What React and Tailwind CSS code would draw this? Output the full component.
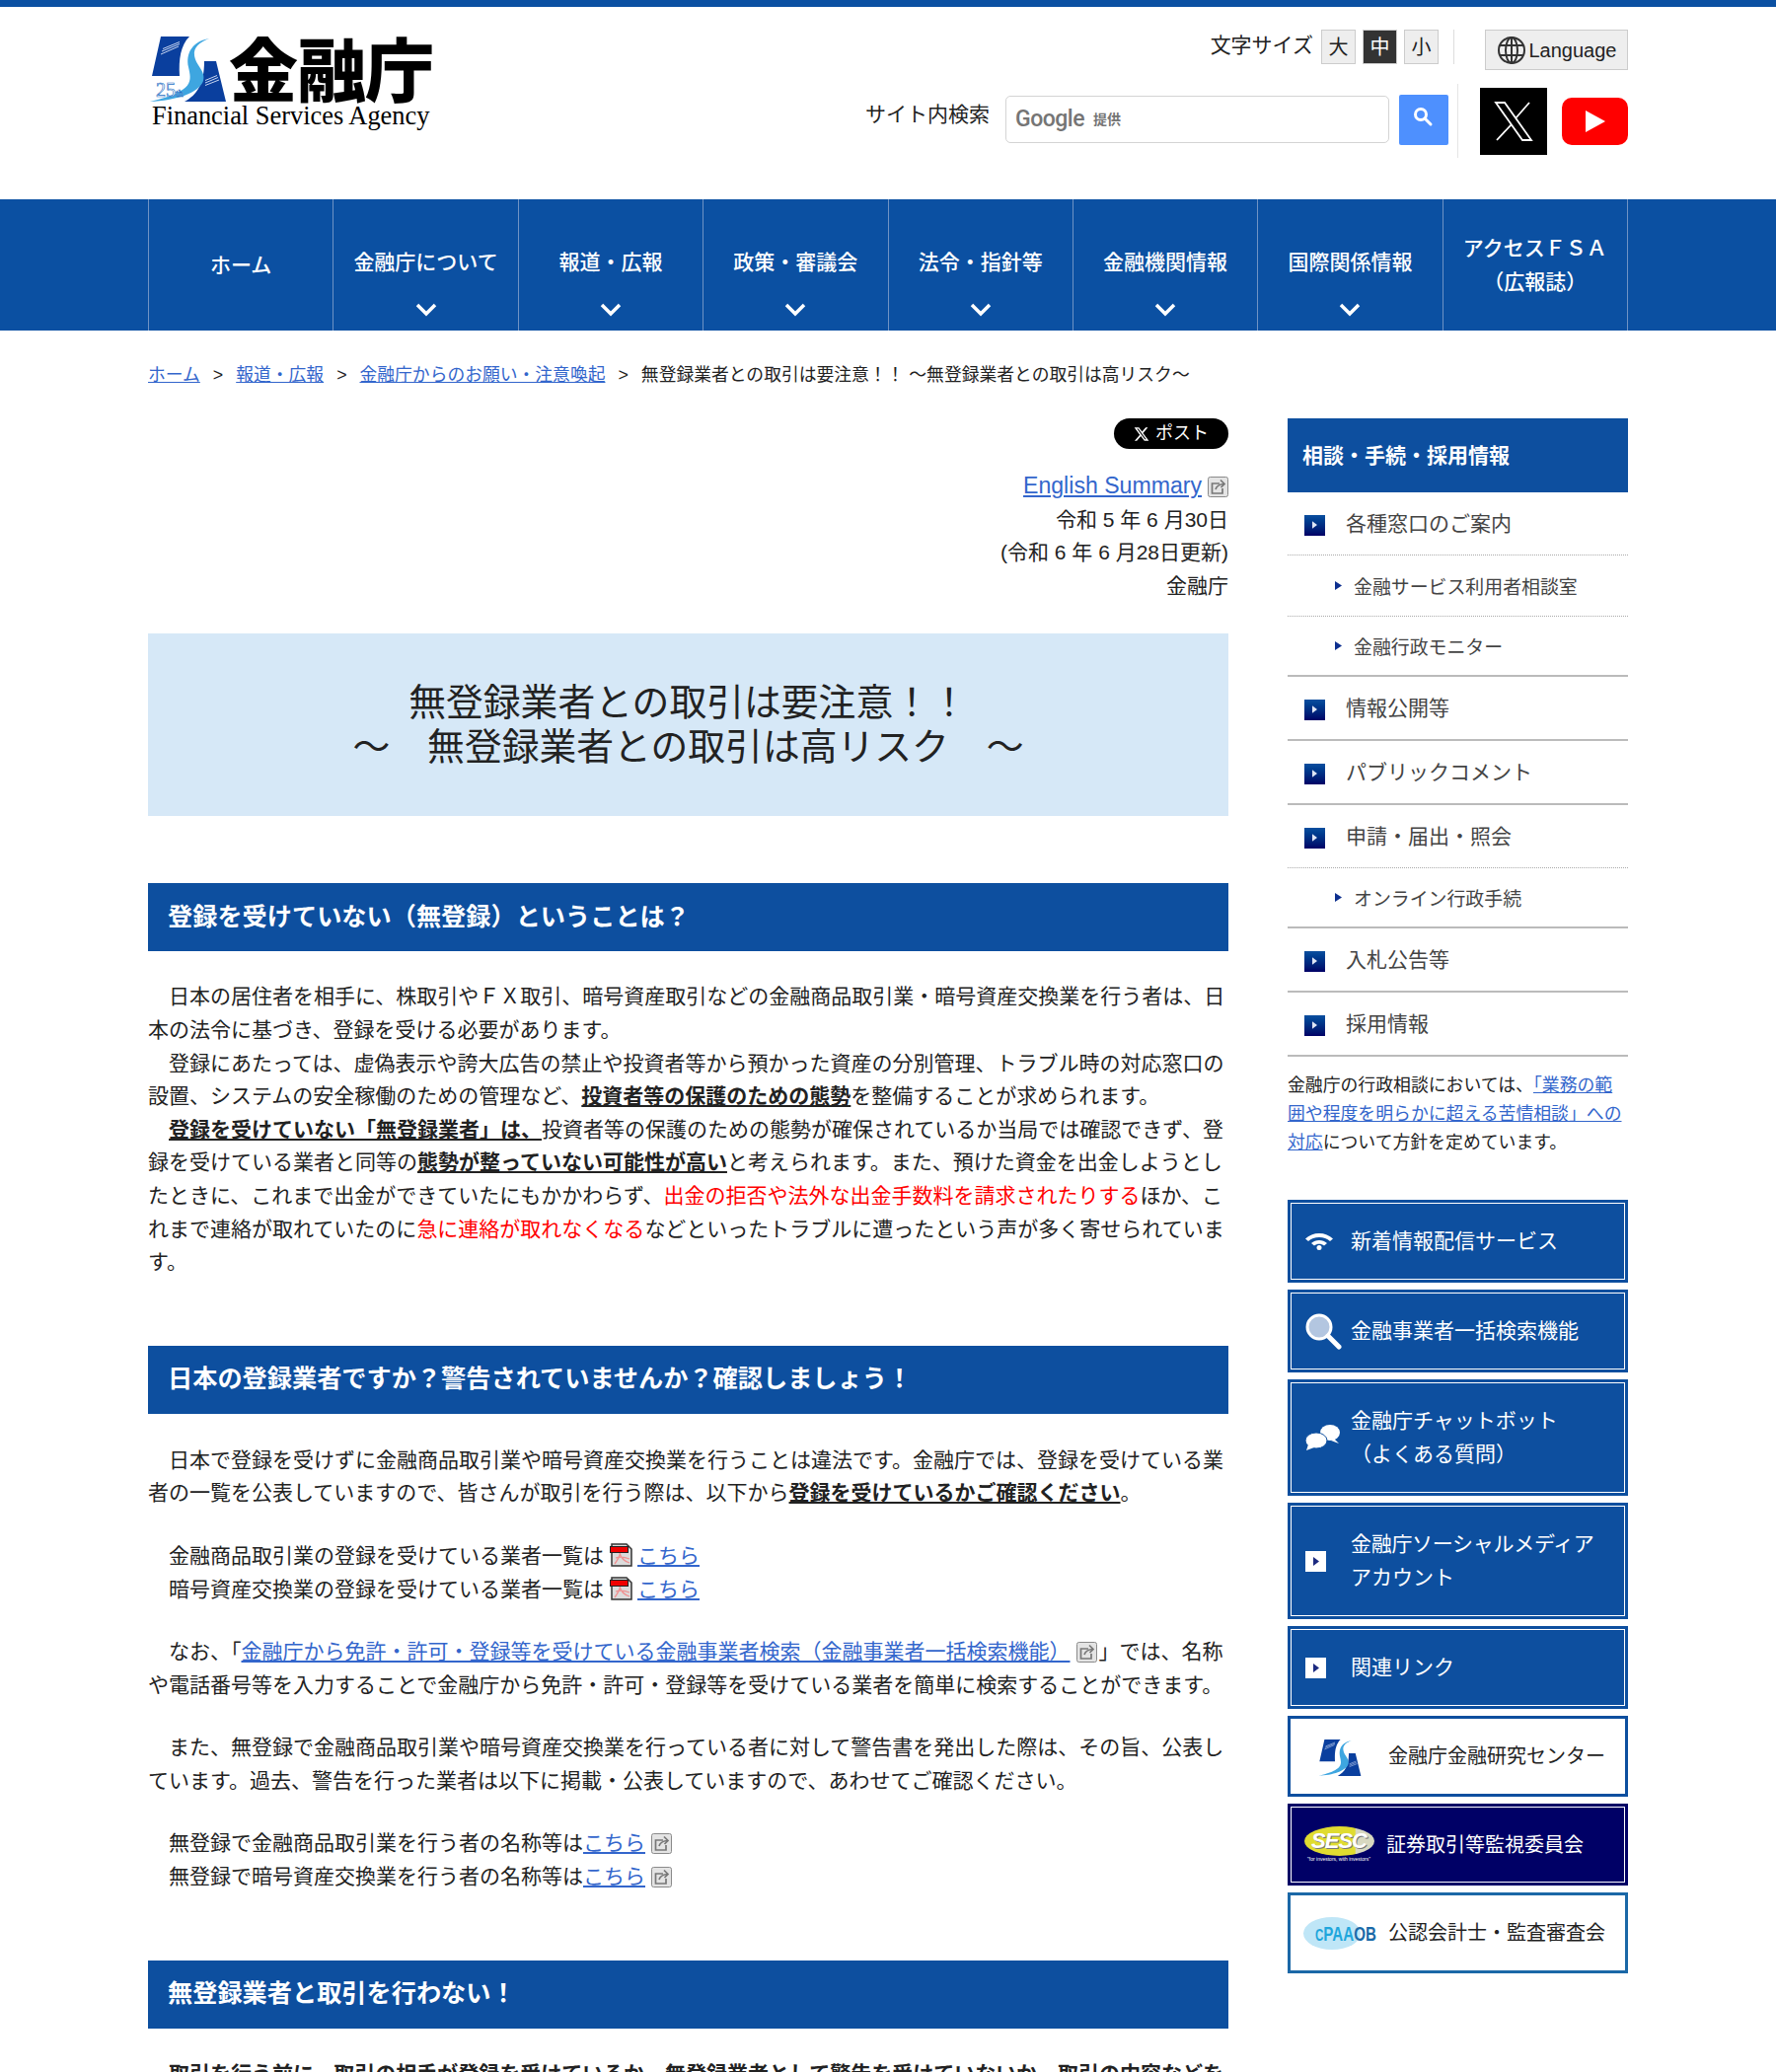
import React from 'react';

const NAV = [
  { label: ['ホーム'], chevron: false },
  { label: ['金融庁について'], chevron: true },
  { label: ['報道・広報'], chevron: true },
  { label: ['政策・審議会'], chevron: true },
  { label: ['法令・指針等'], chevron: true },
  { label: ['金融機関情報'], chevron: true },
  { label: ['国際関係情報'], chevron: true },
  { label: ['アクセスＦＳＡ', '（広報誌）'], chevron: false },
];

const SIDE_MENU = [
  { text: '各種窓口のご案内', line: 'dotted', h: 'h-[64px]' },
  { text: '金融サービス利用者相談室', sub: true, line: 'dotted', h: 'h-[62px]' },
  { text: '金融行政モニター', sub: true, line: 'solid', h: 'h-[61px]' },
  { text: '情報公開等', line: 'solid', h: 'h-[65px]' },
  { text: 'パブリックコメント', line: 'solid', h: 'h-[65px]' },
  { text: '申請・届出・照会', line: 'dotted', h: 'h-[64px]' },
  { text: 'オンライン行政手続', sub: true, line: 'solid', h: 'h-[61px]' },
  { text: '入札公告等', line: 'solid', h: 'h-[65px]' },
  { text: '採用情報', line: 'solid', h: 'h-[65px]' },
];

function Arrow() {
  return (
    <span className="mt-[3px] flex h-[21px] w-[21px] shrink-0 items-center justify-center bg-gradient-to-b from-[#0d4f9f] to-[#000066]">
      <svg width="5" height="8" viewBox="0 0 6 9"><path d="M0 0l6 4.500L0 9z" fill="#dfe6f5" /></svg>
    </span>
  );
}

function WhiteArrow() {
  return (
    <span className="flex h-[21px] w-[21px] shrink-0 items-center justify-center bg-white">
      <svg width="6" height="9" viewBox="0 0 6 9"><path d="M0 0l6 4.500L0 9z" fill="#1c2a80" /></svg>
    </span>
  );
}

function ExternalIcon({ flush }) {
  return (
    <svg className={`ml-[6px] inline-block align-[-4px] ${flush ? '' : 'mr-[2px]'}`} width="21" height="21" viewBox="0 0 21 21">
      <rect x="0.5" y="0.5" width="20" height="20" rx="2" fill="#e4e4e4" stroke="#8a8a8a" />
      <path d="M12 7H4.500v10H15v-5" fill="none" stroke="#777" strokeWidth="1.700" />
      <path d="M8 13c1-3.500 3-5 8-5.500M13 3.500L17 7.500l-3.500 3.500" fill="none" stroke="#777" strokeWidth="1.700" />
    </svg>
  );
}

function PdfIcon() {
  return (
    <svg className="ml-[6px] mr-[5px] inline-block align-[-4px]" width="23" height="24" viewBox="0 0 23 24">
      <path d="M2 1h15l5 5v17H2z" fill="#dcdcdc" stroke="#333" strokeWidth="1.500" />
      <path d="M5 21c3-4 6-9 5.500-13M6 15c4-1.500 8-1.500 14 1M10 10c1 4 4 8 10 10" fill="none" stroke="#f09090" strokeWidth="1.300" />
      <rect x="0.500" y="3.500" width="18" height="6" fill="#f00000" stroke="#222" strokeWidth="1" />
    </svg>
  );
}

function FsaMark({ className, badge }) {
  return (
    <svg className={className} viewBox="0 0 80 75">
      <path d="M13 7H42C33 16 31 30 32 47H4Z" fill="#0a3f9e" />
      <path d="M57 32H69L79 73H37C50 66 57 55 57 32Z" fill="#0a3f9e" />
      <path d="M62 9C45 12 38 24 41 38C44 52 48 62 2 73C28 72 52 64 56 52C59 42 48 36 47 26C46 18 52 13 62 9Z" fill="#3ea6e0" />
      <path d="M13 25L31 17M14 22L32 14.500M15 19.500L32 12.500M58 56.500L72 51M58 54L71 48.500M58 51.500L70 46.500" stroke="#c6d4f0" strokeWidth="1" />
      {badge && <text x="8" y="68" fontSize="20" fontFamily="Liberation Serif" fill="#fff" stroke="#1f6fc4" strokeWidth="0.600">25<tspan fontSize="10">th</tspan></text>}
    </svg>
  );
}

function SideButton({ children, icon, tall, variant = 'blue' }) {
  const heights = tall ? 'h-[118px]' : 'h-[84px]';
  if (variant === 'white' || variant === 'cpa') {
    return (
      <a className={`flex h-[82px] items-center border-[3px] bg-white ${variant === 'cpa' ? 'border-[#1b68a7]' : 'border-[#0d4f9f]'}`}>
        <span className="flex w-[99px] shrink-0 items-center justify-center">{icon}</span>
        <span className="text-[20px] text-[#222]">{children}</span>
      </a>
    );
  }
  if (variant === 'navy') {
    return (
      <div className="h-[83px] bg-[#000066] p-[3px]">
        <a className="flex h-full items-center border border-white">
          <span className="flex w-[96px] shrink-0 items-center justify-center">{icon}</span>
          <span className="text-[20px] text-white">{children}</span>
        </a>
      </div>
    );
  }
  return (
    <div className={`${heights} bg-[#0d4f9f] p-[3px]`}>
      <a className="flex h-full items-center border border-white pl-[13px]">
        <span className="flex w-[47px] shrink-0 items-center pl-[1px]">{icon}</span>
        <span className="text-[21px] leading-[34px] text-white">{children}</span>
      </a>
    </div>
  );
}

function Sidebar() {
  return (
    <aside className="w-[345px] shrink-0">
      <h2 className="flex h-[75px] items-center bg-[#0d4f9f] pl-[15px] text-[21px] font-bold text-white">相談・手続・採用情報</h2>
      <ul>
        {SIDE_MENU.map((item) => (
          <li
            key={item.text}
            className={`flex items-center ${item.h} ${item.line === 'dotted' ? 'border-b border-dotted border-[#aaa]' : 'border-b-2 border-solid border-[#bbb]'}`}
          >
            {item.sub ? (
              <>
                <svg className="ml-[48px] mr-[12px]" width="7" height="9" viewBox="0 0 7 9"><path d="M0 0l7 4.500L0 9z" fill="#0d2f8f" /></svg>
                <span className="pt-[5px] text-[18.900px] text-[#444]">{item.text}</span>
              </>
            ) : (
              <>
                <span className="ml-[17px] mr-[21px]"><Arrow /></span>
                <span className="text-[21px] text-[#444]">{item.text}</span>
              </>
            )}
          </li>
        ))}
      </ul>
      <p className="mt-[15px] text-[17.850px] leading-[29px] text-[#222]">
        金融庁の行政相談においては、<a className="text-[#3366cc] underline">「業務の範囲や程度を明らかに超える苦情相談」への対応</a>について方針を定めています。
      </p>
      <div className="mt-[43px] flex flex-col gap-[7px]">
        <SideButton icon={
          <svg width="28" height="18" viewBox="0 0 28 18"><path d="M0 6.500c7-7.500 21-7.500 28 0l-3 2.500c-5.500-5.500-16.500-5.500-22 0zM6 11c4.500-4 11.500-4 16 0l-3 2.500c-3-2.500-7-2.500-10 0z" fill="#fff" /><circle cx="14" cy="15.500" r="2.500" fill="#fff" /></svg>
        }>新着情報配信サービス</SideButton>
        <SideButton icon={
          <svg width="37" height="37" viewBox="0 0 37 37"><circle cx="14" cy="14" r="12" fill="#b3c6e0" stroke="#fff" strokeWidth="3" /><path d="M23 23l11 11" stroke="#fff" strokeWidth="5" strokeLinecap="round" /></svg>
        }>金融事業者一括検索機能</SideButton>
        <SideButton tall icon={
          <svg width="36" height="28" viewBox="0 0 36 28"><ellipse cx="25" cy="9" rx="10" ry="8" fill="#fff" /><path d="M29 15l5 5-8-3z" fill="#fff" /><ellipse cx="11" cy="17" rx="11" ry="8" fill="#fff" stroke="#0d4f9f" strokeWidth="1" /><path d="M3 21l-2 6 8-3z" fill="#fff" /></svg>
        }>金融庁チャットボット<br />（よくある質問）</SideButton>
        <SideButton tall icon={<WhiteArrow />}><span className="tracking-[-0.300px]">金融庁ソーシャルメディア</span><br />アカウント</SideButton>
        <SideButton icon={<WhiteArrow />}>関連リンク</SideButton>
        <SideButton variant="white" icon={<FsaMark className="h-[42px] w-[45px]" />}>金融庁金融研究センター</SideButton>
        <SideButton variant="navy" icon={
          <span className="flex flex-col items-center">
            <span className="flex h-[30px] w-[71px] items-center justify-center rounded-[50%] bg-[linear-gradient(90deg,#e0dc30_72%,#d8d8c0_74%)] text-[22px] font-bold italic leading-none tracking-[-1px] text-white [text-shadow:1px_1px_0_#777]">SESC</span>
            <span className="whitespace-nowrap text-[5px] leading-[7px] text-white">"for investors, with investors"</span>
          </span>
        }>証券取引等監視委員会</SideButton>
        <SideButton variant="cpa" icon={
          <span className="ml-[-15px] flex h-[33px] w-[58px] items-center justify-start self-center rounded-[50%] bg-[#bfe6f7] pl-[12px] font-bold leading-none">
            <span className="origin-left scale-x-[0.72] whitespace-nowrap text-[21px] text-[#1fa6dc]"><span className="text-[16px]">C</span>PAA<span className="text-[#1a6aa8]">OB</span></span>
          </span>
        }>公認会計士・監査審査会</SideButton>
      </div>
    </aside>
  );
}

function SectionTitle({ children }) {
  return <h2 className="flex h-[69px] items-center bg-[#0d4f9f] pl-[20px] text-[25.200px] font-bold text-white">{children}</h2>;
}

function Link({ children }) {
  return <a className="text-[#3366cc] underline">{children}</a>;
}

function Main() {
  return (
    <main className="w-[1095px] shrink-0">
      <div className="flex justify-end">
        <a className="flex h-[31px] w-[116px] items-center justify-center gap-[6px] rounded-full bg-black text-[18px] text-white">
          <svg width="16" height="16" viewBox="0 0 24 24"><path d="M18.200 2h3.400l-7.400 8.500L23 22h-6.800l-5.300-7-6.100 7H1.400l7.900-9L1 2h7l4.800 6.400zM17 20h1.900L7 3.900H5z" fill="#fff" /></svg>
          ポスト
        </a>
      </div>
      <div className="mt-[21px] text-right text-[21px] leading-[33.600px] text-[#222]">
        <p><a className="text-[23.100px] text-[#3366cc] underline">English Summary</a><ExternalIcon flush /></p>
        <p>令和 5 年 6 月30日</p>
        <p>(令和 6 年 6 月28日更新)</p>
        <p>金融庁</p>
      </div>
      <h1 className="mt-[32px] flex h-[185px] flex-col items-center justify-center bg-[#d6e8f7] text-center text-[37.800px] font-normal leading-[45px] text-[#222]">
        <span>無登録業者との取引は要注意！！</span>
        <span>～　無登録業者との取引は高リスク　～</span>
      </h1>

      <div className="mt-[68px]"><SectionTitle>登録を受けていない（無登録）ということは？</SectionTitle></div>
      <div className="mt-[29px] text-[21px] leading-[33.600px] text-[#222]">
        <p>　日本の居住者を相手に、株取引やＦＸ取引、暗号資産取引などの金融商品取引業・暗号資産交換業を行う者は、日本の法令に基づき、登録を受ける必要があります。</p>
        <p>　登録にあたっては、虚偽表示や誇大広告の禁止や投資者等から預かった資産の分別管理、トラブル時の対応窓口の設置、システムの安全稼働のための管理など、<strong className="underline">投資者等の保護のための態勢</strong>を整備することが求められます。</p>
        <p>　<strong className="underline">登録を受けていない「無登録業者」は、</strong>投資者等の保護のための態勢が確保されているか当局では確認できず、登録を受けている業者と同等の<strong className="underline">態勢が整っていない可能性が高い</strong>と考えられます。また、預けた資金を出金しようとしたときに、これまで出金ができていたにもかかわらず、<span className="text-[#ff0000]">出金の拒否や法外な出金手数料を請求されたりする</span>ほか、これまで連絡が取れていたのに<span className="text-[#ff0000]">急に連絡が取れなくなる</span>などといったトラブルに遭ったという声が多く寄せられています。</p>
      </div>

      <div className="mt-[68px]"><SectionTitle>日本の登録業者ですか？警告されていませんか？確認しましょう！</SectionTitle></div>
      <div className="mt-[30px] flex flex-col gap-[30px] text-[21px] leading-[33.600px] text-[#222]">
        <p>　日本で登録を受けずに金融商品取引業や暗号資産交換業を行うことは違法です。金融庁では、登録を受けている業者の一覧を公表していますので、皆さんが取引を行う際は、以下から<strong className="underline">登録を受けているかご確認ください</strong>。</p>
        <p className="pl-[21px]">
          金融商品取引業の登録を受けている業者一覧は<PdfIcon /><Link>こちら</Link><br />
          暗号資産交換業の登録を受けている業者一覧は<PdfIcon /><Link>こちら</Link>
        </p>
        <p>　なお、「<Link>金融庁から免許・許可・登録等を受けている金融事業者検索（金融事業者一括検索機能）</Link><ExternalIcon />」では、名称や電話番号等を入力することで金融庁から免許・許可・登録等を受けている業者を簡単に検索することができます。</p>
        <p>　また、無登録で金融商品取引業や暗号資産交換業を行っている者に対して警告書を発出した際は、その旨、公表しています。過去、警告を行った業者は以下に掲載・公表していますので、あわせてご確認ください。</p>
        <p className="pl-[21px]">
          無登録で金融商品取引業を行う者の名称等は<Link>こちら</Link><ExternalIcon /><br />
          無登録で暗号資産交換業を行う者の名称等は<Link>こちら</Link><ExternalIcon />
        </p>
      </div>

      <div className="mt-[68px]"><SectionTitle>無登録業者と取引を行わない！</SectionTitle></div>
      <div className="mt-[29px] text-[21px] leading-[33.600px] text-[#222]">
        <p><strong className="underline">　取引を行う前に、取引の相手が登録を受けているか、無登録業者として警告を受けていないか、取引の内容などを確認しましょう。</strong></p>
      </div>
    </main>
  );
}

export default function App() {
  return (
    <div className="h-[2100px] overflow-hidden bg-white font-['Liberation_Sans','Noto_Sans_CJK_JP',sans-serif]">
      <div className="h-[7px] bg-[#0b50a2]" />
      <header className="mx-auto flex h-[195px] w-[1500px] justify-between">
        <div className="pt-[23px]">
          <div className="flex items-start">
            <FsaMark badge className="h-[75px] w-[80px]" />
            <span className="ml-[2px] whitespace-nowrap text-[70px] font-black leading-[88px] tracking-[-1px] text-black">金融庁</span>
          </div>
          <div className="mt-[-16px] pl-[4px] font-['Liberation_Serif'] text-[26.400px] leading-[30px] text-black">Financial Services Agency</div>
        </div>
        <div className="flex flex-col items-end pt-[23px]">
          <div className="flex items-start">
            <span className="mr-[8px] text-[21px] leading-[32px] text-[#222]">文字サイズ</span>
            <div className="flex gap-[7px] text-[20px]">
              <span className="flex h-[35px] w-[35px] items-center justify-center border border-[#ccc] bg-[#eee] text-[#222]">大</span>
              <span className="flex h-[35px] w-[35px] items-center justify-center border border-[#ccc] bg-[#333] text-white">中</span>
              <span className="flex h-[35px] w-[35px] items-center justify-center border border-[#ccc] bg-[#eee] text-[#222]">小</span>
            </div>
            <span className="ml-[15px] mr-[31px] h-[35px] w-px bg-[#ddd]" />
            <span className="flex h-[41px] w-[145px] items-center justify-center gap-[3px] border border-[#ccc] bg-[#eee] text-[20px] text-[#222]">
              <svg width="30" height="30" viewBox="0 0 30 30" fill="none" stroke="#333" strokeWidth="2">
                <circle cx="15" cy="15" r="13" /><ellipse cx="15" cy="15" rx="6" ry="13" /><path d="M3 10h24M3 20h24M15 2v26" />
              </svg>
              Language
            </span>
          </div>
          <div className="mt-[14px] flex items-center">
            <span className="mb-[13px] mr-[16px] text-[21px] text-[#222]">サイト内検索</span>
            <div className="mb-[3px] flex h-[48px] w-[389px] items-center rounded-[5px] border border-[#d4d4d4] bg-white pl-[9px]">
              <span className="font-['Roboto'] text-[23px] font-medium tracking-[-0.500px] text-[#757575]">Google</span>
              <span className="ml-[9px] text-[14px] font-bold text-[#757575]">提供</span>
            </div>
            <button className="mb-[3px] ml-[10px] flex h-[51px] w-[50px] items-center justify-center rounded-[2px] bg-[#4e90fe]">
              <svg className="mb-[5px] mr-[3px]" width="22" height="22" viewBox="0 0 22 22" fill="none" stroke="#fff"><circle cx="9" cy="8" r="5.500" strokeWidth="3" /><path d="M13 12l6 6" strokeWidth="3" strokeLinecap="round" /></svg>
            </button>
            <span className="ml-[9px] mr-[22px] h-[75px] w-px bg-[#e5e5e5]" />
            <span className="flex h-[68px] w-[68px] items-center justify-center bg-black">
              <svg width="40" height="40" viewBox="0 0 40 40" fill="none" stroke="#fff" strokeWidth="1.800"><path d="M2 1h9l27 38h-9zM36 1L22 17M18 23L3 39" /></svg>
            </span>
            <span className="ml-[15px] flex h-[48px] w-[67px] items-center justify-center rounded-[10px] bg-[#ff0000]">
              <svg width="20" height="22" viewBox="0 0 20 22"><path d="M0 0l20 11L0 22z" fill="#fff" /></svg>
            </span>
          </div>
        </div>
      </header>

      <nav className="h-[133px] bg-[#0b50a2]">
        <ul className="mx-auto flex h-full w-[1500px]">
          {NAV.map((item) => (
            <li key={item.label[0]} className="relative flex h-full flex-1 flex-col items-center justify-center border-l border-[#6f93c4] text-[21px] font-medium leading-[34px] text-white last:border-r">
              {item.label.map((line) => (
                <span key={line} className={item.chevron ? 'mb-[6px]' : ''}>{line}</span>
              ))}
              {item.chevron && (
                <svg className="absolute bottom-[14px] left-1/2 ml-[-11px]" width="22" height="14" viewBox="0 0 22 14" fill="none" stroke="#fff" strokeWidth="3.500"><path d="M2 2l9 9 9-9" /></svg>
              )}
            </li>
          ))}
        </ul>
      </nav>

      <div className="mx-auto w-[1500px]">
        <div className="flex h-[89px] items-center pt-[2px] text-[17.800px] text-[#222]">
          <Link>ホーム</Link><span className="mx-[13px]">&gt;</span>
          <Link>報道・広報</Link><span className="mx-[13px]">&gt;</span>
          <Link>金融庁からのお願い・注意喚起</Link><span className="mx-[13px]">&gt;</span>
          <span>無登録業者との取引は要注意！！ ～無登録業者との取引は高リスク～</span>
        </div>
        <div className="flex justify-between">
          <Main />
          <Sidebar />
        </div>
      </div>
    </div>
  );
}
